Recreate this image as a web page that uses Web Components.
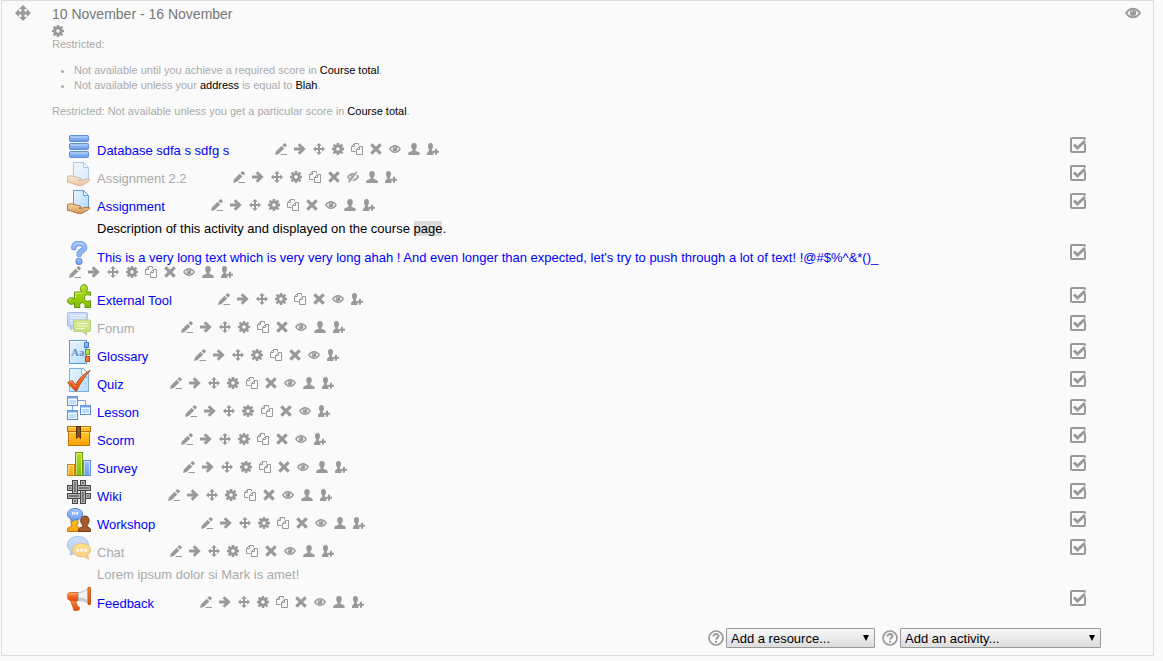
<!DOCTYPE html>
<html lang="en">
<head>
<meta charset="utf-8">
<title>Course</title>
<style>
    body{
        margin: 0 9px 0 1px;
        background: #fafafa;
        color: #000;
        font-family: "Liberation Sans", Arial, sans-serif;
        font-size: 13px;
        line-height: 17px;
    }

    availability-info b{
        font-weight: normal;
        color: #000;
    }
</style>
</head>
<body>
<course-section heading="10 November - 16 November">
    <availability-info slot="info">
        <p>Restricted:</p>
        <ul>
            <li>Not available until you achieve a required score in <b>Course total</b>.</li>
            <li>Not available unless your <b>address</b> is equal to <b>Blah</b>.</li>
        </ul>
        <p>Restricted: Not available unless you get a particular score in <b>Course total</b>.</p>
    </availability-info>
    <activity-row mod="database" name="Database sdfa s sdfg s"></activity-row>
    <activity-row mod="assignment" name="Assignment 2.2" dimmed></activity-row>
    <activity-row mod="assignment" name="Assignment">Description of this activity and displayed on the course <mark>page</mark>.</activity-row>
    <activity-row mod="choice" name="This is a very long text which is very very long ahah ! And even longer than expected, let's try to push through a lot of text! !@#$%^&amp;*()_"></activity-row>
    <activity-row mod="tool" name="External Tool" nogroups></activity-row>
    <activity-row mod="forum" name="Forum" dimmed visible></activity-row>
    <activity-row mod="glossary" name="Glossary" nogroups></activity-row>
    <activity-row mod="quiz" name="Quiz"></activity-row>
    <activity-row mod="lesson" name="Lesson" nogroups></activity-row>
    <activity-row mod="scorm" name="Scorm" nogroups></activity-row>
    <activity-row mod="survey" name="Survey"></activity-row>
    <activity-row mod="wiki" name="Wiki"></activity-row>
    <activity-row mod="workshop" name="Workshop"></activity-row>
    <activity-row mod="chat" name="Chat" dimmed visible>Lorem ipsum dolor si Mark is amet!</activity-row>
    <activity-row mod="feedback" name="Feedback"></activity-row>
    <add-menu slot="menus" label="Add a resource..." size="short"></add-menu>
    <add-menu slot="menus" label="Add an activity..." size="long"></add-menu>
</course-section>

<script>
// small grey icons, 12x12 grid
const eye = '<path d="M0 6C1.500 3.300 3.700 2 6 2S10.500 3.300 12 6C10.500 8.700 8.300 10 6 10S1.500 8.700 0 6z"/><path d="M1.700 6C2.800 4.400 4.400 3.500 6 3.500S9.200 4.400 10.300 6C9.200 7.600 7.600 8.500 6 8.500S2.800 7.600 1.700 6z" fill="#fafafa"/><circle cx="6" cy="5.900" r="2.400"/><path d="M4.800 5.600q.2-1 1.200-1.100" fill="none" stroke="#fafafa" stroke-width=".7"/>';
const person = '<path d="M6 0C7.900 0 8.800 1.300 8.800 3.100c0 1.500-.6 2.600-1.300 3.300v1.400c1 .8 4.200.8 4.200 3V12H.3v-1.200c0-2.200 3.200-2.200 4.200-3V6.400C3.800 5.700 3.200 4.600 3.200 3.100 3.200 1.300 4.100 0 6 0z"/>';
const glyphs = {
    edit: '<path d="M0 12l.9-3.600 5.700-5.700 2.700 2.700-5.700 5.700zM7.400 1.900L9 .4q.6-.6 1.200 0l1.400 1.400q.6.600 0 1.200L10.100 4.600z"/><path d="M6 11h6v1H5z"/>',
    right: '<path d="M0 4.500h5.900L3.700 2.300 5.700.3 11.700 6 5.700 11.700 3.700 9.700 5.900 7.500H0z"/>',
    move: '<path d="M6 0l2.800 2.800H7V5h2.200V3.200L12 6 9.200 8.800V7H7v2.200h1.800L6 12 3.200 9.200H5V7H2.800v1.800L0 6l2.800-2.800V5H5V2.800H3.200z"/>',
    movelarge: '<path d="M6 0l3 3H7.100v1.900H9V3l3 3-3 3V7.100H7.100V9H9l-3 3-3-3h1.900V7.100H3V9L0 6l3-3v1.900h1.900V3H3z"/>',
    cog: '<circle cx="6" cy="6" r="3.200" fill="none" stroke="#999" stroke-width="2.800"/><path d="M6 0v3M6 9V12M0 6h3M9 6H12M1.600 1.600l2 2M8.400 8.400l2 2M1.600 10.400l2-2M8.400 3.600l2-2" stroke="#999" stroke-width="2.500"/>',
    copy: '<path d="M4.500 8.500h-4v-5l3-3h4v2M.5 3.500h3v-3M5.500 11.500v-5l3-3h3v8zM5.500 6.500h3v-3" fill="none" stroke="#999"/>',
    remove: '<path d="M1.300 1.300l9.400 9.400M10.700 1.300l-9.400 9.400" stroke="#999" stroke-width="3.200"/>',
    eye: eye,
    hidden: eye + '<path d="M3 11.600L11 .8" stroke="#fafafa" stroke-width="1.600"/><path d="M1.800 11.200L9.800.6" stroke="#999" stroke-width="1.500"/>',
    user: person,
    assign: '<g transform="translate(-1 0)"><path d="M4.500 0C6.200 0 7 1.200 7 3 7 4.500 6.500 5.500 5.900 6.300v1.400c.5.400 1 .5 1.500.7V12H1v-1.200C1 8.800 2.500 8.500 3.200 7.700V6.300C2.500 5.500 2 4.500 2 3c0-1.800.9-3 2.500-3z"/></g><path d="M8 5.700h2v2h2v2h-2v2H8v-2H6v-2h2z"/>',
};

const actionNames = {
    edit: 'Edit title', right: 'Move right', move: 'Move', movelarge: 'Move section', cog: 'Edit settings',
    copy: 'Duplicate', remove: 'Delete', eye: 'Hide', hidden: 'Show', user: 'No groups', assign: 'Assign roles',
};

// activity icons, 24x24 grid
const defs = `
<defs>
    <linearGradient id="blue" x2="0" y2="1"><stop stop-color="#a3c5fb"/><stop offset="1" stop-color="#6c9bea"/></linearGradient>
    <linearGradient id="pale" x2="1" y2="1"><stop stop-color="#e8f5ff"/><stop offset="1" stop-color="#b5dcfb"/></linearGradient>
    <linearGradient id="green" x2="0" y2="1"><stop stop-color="#b5df1d"/><stop offset="1" stop-color="#83bf05"/></linearGradient>
    <linearGradient id="gold" x2="0" y2="1"><stop stop-color="#ffc928"/><stop offset="1" stop-color="#faa20d"/></linearGradient>
    <linearGradient id="red" x2="0" y2="1"><stop stop-color="#fb8a3a"/><stop offset="1" stop-color="#de4c0c"/></linearGradient>
    <linearGradient id="skin" x2="0" y2="1"><stop stop-color="#fad9ab"/><stop offset="1" stop-color="#d59552"/></linearGradient>
</defs>`;
const page = '<path d="M2.500.5h14l5 5.500v17.500h-19z" fill="url(#pale)" stroke="#78aee8"/>';
const art = {
    database: [1, 9, 17].map(y => `<rect x="2.500" y="${y + .5}" width="19" height="6" rx="1" fill="url(#blue)" stroke="#5c8fe0"/><path d="M4 ${y + 2}h16" stroke="#b7d1fc"/>`).join(''),
    assignment: '<path d="M6.500.5h10l5 5v13h-15z" fill="url(#pale)" stroke="#5f9be3"/><path d="M16.500.5v5h5z" fill="#f3faff" stroke="#5f9be3"/><path d="M.5 14.500c2-.9 5-1 7.500.2 1.700.9 4.700.7 5.700 1.600.8.900-.2 1.700-1.700 1.900 3.500.3 6.500-1 9-1 2 0 2.500 1 .8 2.100l-5.300 3.200c-1.700 1-3.500 1.200-5.500.9-4-.7-6.500-3.100-10.500-3.100z" fill="url(#skin)" stroke="#a9672d" stroke-width=".9"/>',
    choice: '<path d="M6.800 6.500C6.500 1 17.800 1.300 17.600 6.500 17.500 10 12 9.500 12.200 13.300" fill="none" stroke="#6c9ae6" stroke-width="5.600" stroke-linecap="round"/><path d="M6.800 6.500C6.500 1 17.800 1.300 17.600 6.500 17.500 10 12 9.500 12.200 13.300" fill="none" stroke="#8fb5f6" stroke-width="4" stroke-linecap="round"/><path d="M6.300 4.700C8 1.800 14 1.300 17 4" fill="none" stroke="#bed7ff" stroke-width="1.200"/><circle cx="12" cy="20.400" r="3.200" fill="url(#blue)" stroke="#5787dc"/>',
    tool: '<path d="M7.500 8h7.400c-1.700-1.600-1.900-2.800-1.300-4.400C14.300 1.600 15.600.6 17 .6s2.800 1 3.300 2.700c.4 1.900.1 3.100-1.300 4.700h4.500v3.500c-4-2.200-6 .2-6 2.500s2 4.700 6 2.500v7h-5.600c.8-3-.5-4.800-2.500-4.800-2.100 0-3.300 1.800-2.500 4.800H7.500v-4.500c-1.400 1.500-2.900 1.700-4.300 1.100C1.500 19.400.6 18.400.6 17c0-1.500 1-2.700 2.700-3.200 1.600-.4 2.800 0 4.200 1.300z" fill="url(#green)" stroke="#609508"/><path d="M8.600 14V9.100H15.500M15.200 4.200C15.400 2.500 16.300 1.900 17 1.800M2 17c0-1.200 1-2 2.200-2.100" fill="none" stroke="#d8f17c"/>',
    forum: '<path d="M.5 1.500q0-1 1-1h18q1 0 1 1v12q0 1-1 1h-12l-4 3.500v-3.500h-2q-1 0-1-1z" fill="url(#blue)" stroke="#5787dc"/><path d="M3 3.500h15M3 6h15M3 8.500h4M3 11h4" stroke="#e1edff"/><path d="M6.500 9q0-1 1-1h15q1 0 1 1v9.500q0 1-1 1h-3v3.500l-4-3.500h-8q-1 0-1-1z" fill="url(#green)" stroke="#70a317"/><path d="M9.500 11.500h11M9.500 14h11M9.500 16.500h8" stroke="#f1fbc8"/>',
    glossary: '<rect x="2.500" y=".5" width="17" height="23" fill="url(#pale)" stroke="#529bd9"/><path d="M3.500 1.500h15" stroke="#fff"/><text x="4" y="16" font-family="Liberation Serif, serif" font-weight="bold" font-size="11" fill="#648fc7">Aa</text><rect x="17.500" y="2.500" width="4" height="5" fill="url(#blue)" stroke="#4a7dd0"/><rect x="18.500" y="9.500" width="4" height="5" fill="#b9de53" stroke="#6ca000"/><rect x="18.500" y="16.500" width="4" height="5" fill="#f2783e" stroke="#c64308"/>',
    quiz: page + '<path d="M14.500.5h2l5 5.500v3h-3l-4-4z" fill="#f4fbff" stroke="#78aee8"/><path d="M.7 14.500l4.600-1.900 3.200 4.300C12.500 10 17 5.500 23.300 2.300 18 8.500 13.500 15 9.300 23.300 6.500 21.500 3.500 18 .7 14.500z" fill="url(#red)" stroke="#a53b0a" stroke-width=".8"/><path d="M2.300 14.700l2.700-1 3.500 4.700" fill="none" stroke="#ffb27b" stroke-width=".9"/>',
    lesson: '<path d="M5.500 9v6M11 4.500h7.500V9" fill="none" stroke="#76a2e8"/>' + [[.5, .5], [13.5, 9.5], [.5, 14.5]].map(([x, y]) => `<rect x="${x}" y="${y}" width="10" height="9" fill="#f3faff" stroke="#5a8bdc"/><path d="M${x} ${y + 1}h10" stroke="#78a6ee" stroke-width="2"/><rect x="${x + 1.500}" y="${y + 3.500}" width="7" height="4" fill="#b8e0fb"/>`).join(''),
    scorm: '<rect x="1.500" y="6.500" width="21" height="15" fill="url(#gold)" stroke="#bd7010"/><rect x=".5" y="2.500" width="23" height="5" fill="#ffbb24" stroke="#bd7010"/><path d="M1.500 3.500h21M2 8.500h20" stroke="#ffe176"/><path d="M9.500 2.500h4v12l-2-2-2 2z" fill="#84522a" stroke="#58310f"/>',
    survey: '<rect x=".5" y="12.500" width="7" height="11" fill="url(#gold)" stroke="#d27f06"/><rect x="8.500" y=".5" width="7" height="23" fill="url(#green)" stroke="#65990a"/><rect x="16.500" y="8.500" width="7" height="15" fill="url(#blue)" stroke="#5c8fdb"/><path d="M1.500 23v-9.500h5V23M9.500 23V1.500h5V23M17.500 23V9.500h5V23" fill="none" stroke="#fff" stroke-opacity=".5"/>',
    // woven strips: x, y, width, height
    wiki: [[.5, 5.5, 5, 5], [10.5, 5.5, 13, 5], [.5, 13.5, 13, 5], [18.5, 13.5, 5, 5], [13.5, .5, 5, 5], [5.5, .5, 5, 13], [5.5, 18.5, 5, 5], [13.5, 10.5, 5, 13]].map(([x, y, w, h]) => `<rect x="${x}" y="${y}" width="${w}" height="${h}" fill="#777" stroke="#444"/><rect x="${x + 1}" y="${y + 1}" width="${w - 2}" height="${h - 2}" fill="#777" stroke="#b5b5b5"/>`).join(''),
    workshop: '<path d="M4 9h7v6l-1.500 3c1 1 3.500 1 3.500 3.500v2H.5v-2C.5 19 4 19 5 18l-1-3z" fill="url(#gold)" stroke="#c17710"/><path d="M18 8c3 0 4.300 2.300 4 5-.2 2-1 3.300-1.800 4.200v1.600c1 .7 3.300.8 3.300 3v1.700h-12V22c0-2.200 2.500-2.300 4.200-3.200v-1.600c-1-.9-1.700-2.200-1.900-4.200-.3-2.700 1.200-5 4.200-5z" fill="#a75c2b" stroke="#713713"/><path d="M5 13.500l2-1.500c3 0 8.500-.8 8.500-5.800C15.500 2.500 12 .5 8 .5S.5 2.500.5 6.200c0 2.700 2 4.500 4.500 5.300z" fill="url(#blue)" stroke="#4d80d1"/><path d="M5.500 4v2.500M7 4v3M9 4v2.500M10.500 4v3" stroke="#fff"/>',
    chat: '<path d="M11 .5C5 .5.5 3.800.5 9c0 3 1.500 5.200 3.500 6.500L3.500 19l5-2h3c6 0 10-3 10-8S17 .5 11 .5z" fill="url(#blue)" stroke="#5787dc"/><path d="M14.500 7.500c-5.500 0-9 2.700-9 6.500 0 4 4 6.800 9 6.800l2.500-.2 4.500 2.600-.8-4.200c1.800-1.200 2.800-3 2.800-5 0-3.800-3.500-6.500-9-6.500z" fill="url(#gold)" stroke="#d28a16"/><path d="M9.500 13h2.500v2.500H9.500zM13.500 13h2.500v2.500h-2.500zM17.500 13h2.500v2.500h-2.500z" fill="#fff"/>',
    feedback: '<path d="M3.500 12h7l-1.500 3.500 1.500 3.500 2 1.500-.5 2.500-5 .7c-.5-4-3-6.700-3.500-11.700z" fill="url(#red)" stroke="#c9500f" stroke-width=".8"/><path d="M.6 9.500C.6 6 2 5.500 4 5.500h7.500v8H4c-2 0-3.400-.5-3.400-4z" fill="url(#red)" stroke="#d0560f" stroke-width=".8"/><path d="M11.500 5.500C15.500 5.300 18.500 3.500 21 1.500v14.500c-2.500-1.500-5.500-2.300-9.500-2.500z" fill="#f2f3f4" stroke="#b5b8bb" stroke-width=".8"/><path d="M12 10.500c4 .2 6.500 1 8.500 2.500v2.500c-2.300-1.500-5.200-2.200-8.500-2.300z" fill="#c8ccd0"/><path d="M21 .5h2.500v17H21z" fill="url(#red)" stroke="#c9500f" stroke-width=".8"/><path d="M2 8.500c.3-1.500 1-1.800 2-1.800h6.500" fill="none" stroke="#ffb585"/>',
};

class ActionIcon extends HTMLElement {
    connectedCallback(){
        const type = this.getAttribute('type');
        this.attachShadow({ mode: 'open' }).innerHTML = `
<style>
    :host{
        display: block;
        width: 12px;
        height: 12px;
    }
    :host([large]){
        width: 16px;
        height: 16px;
    }
    a, svg{
        display: block;
        width: 100%;
        height: 100%;
    }
</style>
<a href="#" aria-label="${actionNames[type]}"><svg viewBox="0 0 12 12" fill="#999">${glyphs[type]}</svg></a>`;
    }
}
customElements.define('action-icon', ActionIcon);

class ModIcon extends HTMLElement {
    connectedCallback(){
        this.attachShadow({ mode: 'open' }).innerHTML = `
<style>
    :host, svg{
        display: block;
        width: 24px;
        height: 24px;
    }
</style>
<svg viewBox="0 0 24 24" aria-hidden="true">${defs}${art[this.getAttribute('type')]}</svg>`;
    }
}
customElements.define('mod-icon', ModIcon);

class CompletionBox extends HTMLElement {
    connectedCallback(){
        this.attachShadow({ mode: 'open' }).innerHTML = `
<style>
    :host{
        display: block;
    }
    label{
        display: grid;
        width: 16px;
        height: 16px;
    }
    input, svg{
        grid-area: 1 / 1;
        width: 16px;
        height: 16px;
        margin: 0;
    }
    input{
        appearance: none;
        box-sizing: border-box;
        border: 2px solid #999;
        border-radius: 2px;
    }
    svg{
        pointer-events: none;
    }
    input:not(:checked) + svg{
        visibility: hidden;
    }
</style>
<label>
    <input type="checkbox" checked aria-label="${this.getAttribute('label')}">
    <svg viewBox="0 0 16 16" fill="none"><path d="M13 4.500L16 2v5z" fill="#fafafa"/><path d="M4 7.500l3.500 3.500L15 4" stroke="#999" stroke-width="3"/></svg>
</label>`;
    }
}
customElements.define('completion-box', CompletionBox);

class ActivityRow extends HTMLElement {
    connectedCallback(){
        const name = this.getAttribute('name');
        const hidden = this.hasAttribute('dimmed') && !this.hasAttribute('visible');
        const actions = ['edit', 'right', 'move', 'cog', 'copy', 'remove', hidden ? 'hidden' : 'eye'];
        if (!this.hasAttribute('nogroups')){
            actions.push('user');
        }
        actions.push('assign');
        this.attachShadow({ mode: 'open' }).innerHTML = `
<style>
    :host{
        display: flex;
        justify-content: space-between;
        gap: 10px;
        padding: 0 15px 4px;
    }
    .line{
        display: flex;
        flex-wrap: wrap;
        align-items: baseline;
        column-gap: 44px;
    }
    .instance{
        display: grid;
        grid-template-columns: 24px auto;
        column-gap: 6px;
        height: 24px;
    }
    .name{
        align-self: baseline;
        padding-top: 9px;
        line-height: 15px;
        color: #00f;
        text-decoration: none;
    }
    .actions{
        display: flex;
        gap: 7px;
        padding: 1px 0 2px 2px;
    }
    .text{
        margin: 6px 0 0 30px;
    }
    :host(:empty) .text{
        display: none;
    }
    :host([dimmed]) mod-icon{
        opacity: .5;
    }
    :host([dimmed]) .name,
    :host([dimmed]) .text{
        color: #aaa;
    }
    ::slotted(mark){
        background: #ddd;
        color: inherit;
    }
    completion-box{
        padding-top: 3px;
    }
</style>
<div>
    <div class="line">
        <div class="instance"><mod-icon type="${this.getAttribute('mod')}"></mod-icon><a class="name" href="#"></a></div>
        <div class="actions">${actions.map(a => `<action-icon type="${a}"></action-icon>`).join('')}</div>
    </div>
    <div class="text"><slot></slot></div>
</div>
<completion-box label="Completion"></completion-box>`;
        this.shadowRoot.querySelector('.name').textContent = name;
    }
}
customElements.define('activity-row', ActivityRow);

class AvailabilityInfo extends HTMLElement {
    connectedCallback(){
        this.attachShadow({ mode: 'open' }).innerHTML = `
<style>
    :host{
        display: block;
        font-size: 11px;
        line-height: 15px;
        color: #aaa;
    }
    ::slotted(p){
        margin: 0;
    }
    ::slotted(ul){
        margin: 11px 0;
        padding-left: 22px;
    }
</style>
<slot></slot>`;
    }
}
customElements.define('availability-info', AvailabilityInfo);

class AddMenu extends HTMLElement {
    connectedCallback(){
        const label = this.getAttribute('label');
        this.attachShadow({ mode: 'open' }).innerHTML = `
<style>
    :host{
        display: flex;
        align-items: center;
        gap: 2px;
    }
    .help, .help svg{
        display: block;
        width: 16px;
        height: 16px;
    }
    .box{
        display: grid;
        align-items: center;
        width: 149px;
    }
    :host([size=long]) .box{
        width: 201px;
    }
    select, .arrow{
        grid-area: 1 / 1;
    }
    select{
        appearance: none;
        width: 100%;
        height: 20px;
        padding: 0 20px 0 4px;
        border: 1px solid #999;
        border-radius: 1px;
        background: linear-gradient(#f8f8f8, #ddd);
        color: #000;
        font: inherit;
    }
    .arrow{
        justify-self: end;
        width: 6px;
        height: 6px;
        margin-right: 6px;
        pointer-events: none;
    }
</style>
<a class="help" href="#" aria-label="Help"><svg viewBox="0 0 16 16" fill="none" stroke="#999"><circle cx="8" cy="8" r="7" stroke-width="1.700"/><path d="M5.500 6.500C5.300 3.300 10.500 3.300 10.500 6.200 10.500 8 8 7.700 8 9.600M8 10.800v2" stroke-width="2"/></svg></a>
<div class="box">
    <select aria-label="${label}"><option>${label}</option></select>
    <svg class="arrow" viewBox="0 0 6 6"><path d="M0 0h6L3 6z"/></svg>
</div>`;
    }
}
customElements.define('add-menu', AddMenu);

class CourseSection extends HTMLElement {
    connectedCallback(){
        this.attachShadow({ mode: 'open' }).innerHTML = `
<style>
    :host{
        display: grid;
        grid-template-columns: 50px 1fr 52px;
        border: 1px solid #ddd;
    }
    .left{
        padding: 4px 0 0 13px;
    }
    .right{
        padding: 4px 0 0 24px;
    }
    h3{
        margin: 5px 0 2px;
        font-size: 14px;
        font-weight: normal;
        color: #777;
    }
    .activities{
        padding-top: 15px;
    }
    .menus{
        display: flex;
        flex-wrap: wrap;
        justify-content: flex-end;
        gap: 7px;
        padding: 13px 0 7px;
    }
</style>
<div class="left"><action-icon type="movelarge" large></action-icon></div>
<div>
    <h3>${this.getAttribute('heading')}</h3>
    <action-icon type="cog"></action-icon>
    <slot name="info"></slot>
    <div class="activities"><slot></slot></div>
    <div class="menus"><slot name="menus"></slot></div>
</div>
<div class="right"><action-icon type="eye" large></action-icon></div>`;
    }
}
customElements.define('course-section', CourseSection);
</script>
</body>
</html>
